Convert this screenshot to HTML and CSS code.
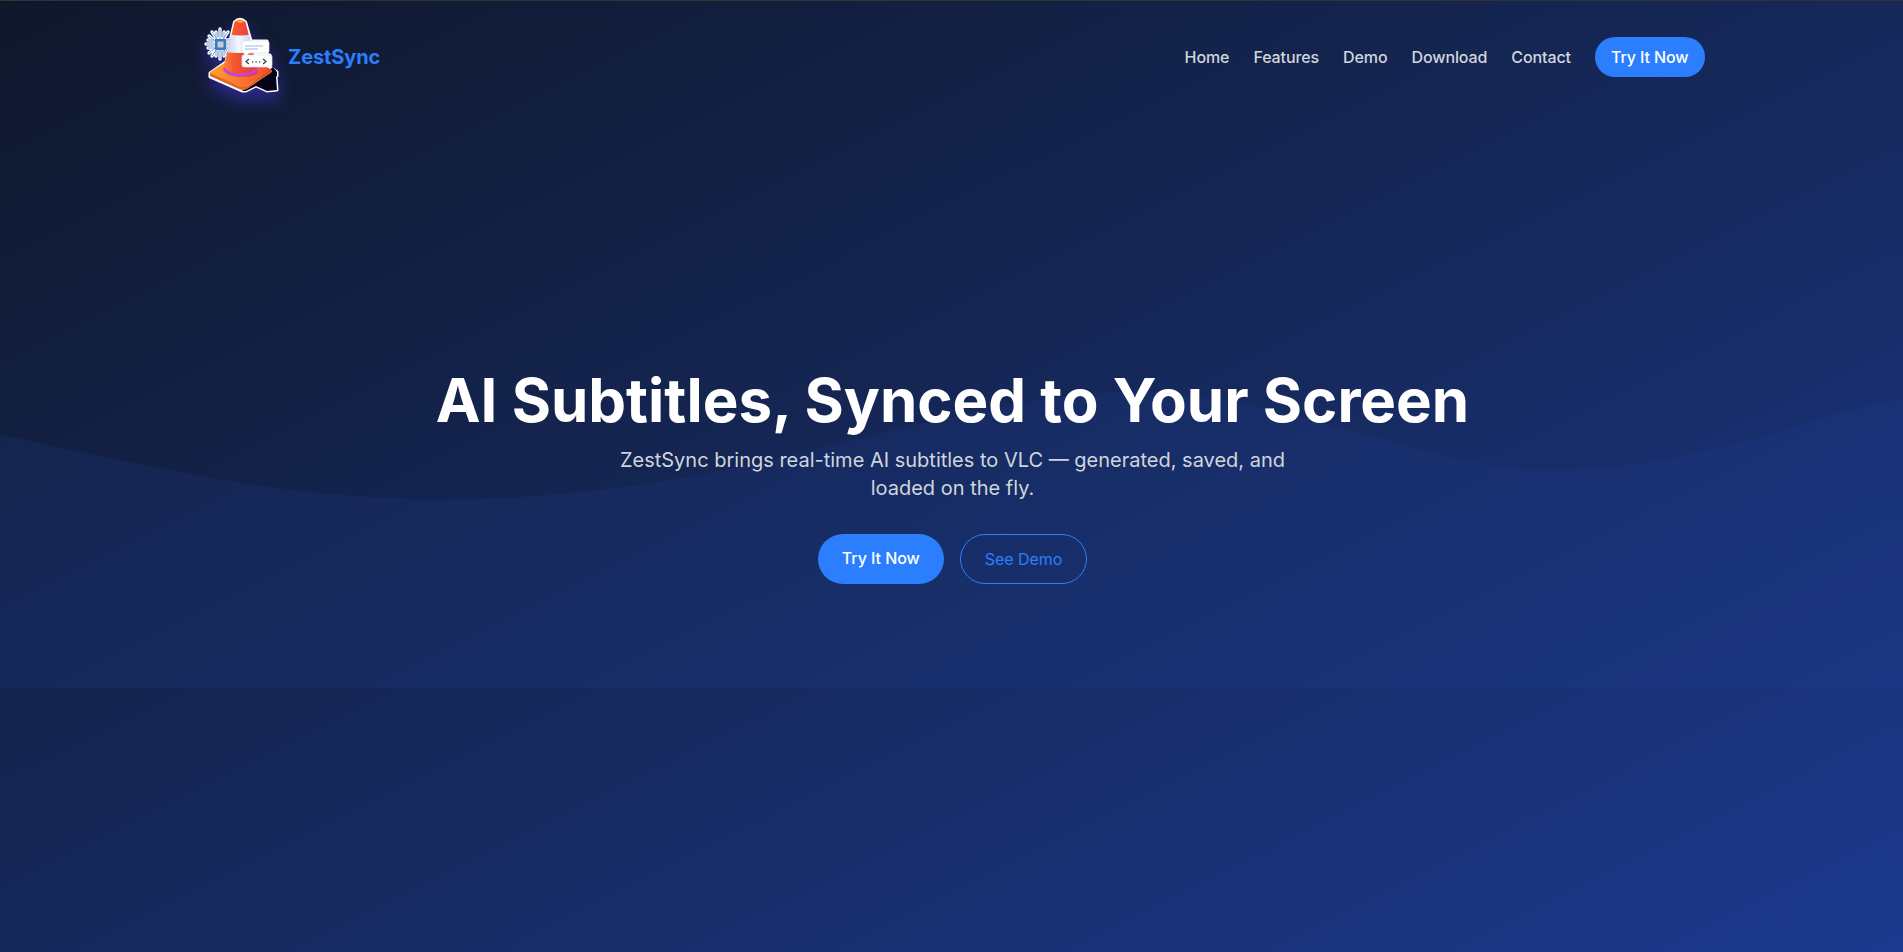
FILE: index.html
```html
<!DOCTYPE html>
<html lang="en">
<head>
<meta charset="utf-8">
<title>ZestSync</title>
<link rel="stylesheet" href="styles.css">
</head>
<body>
<div class="page">
  <svg class="wave" viewBox="0 0 1440 320" aria-hidden="true">
    <path d="M0,128L48,138.7C96,149,192,171,288,176C384,181,480,171,576,149.3C672,128,768,96,864,96C960,96,1056,144,1152,154.7C1248,160,1344,128,1392,112L1440,101L1440,320L0,320Z"/>
  </svg>
  <header class="header">
    <a class="brand" href="#">
      <svg class="logo" viewBox="0 0 90 100" aria-hidden="true">
        <defs>
          <linearGradient id="cone" x1="0" x2="1"><stop offset="0" stop-color="#ff8a3c"/><stop offset=".35" stop-color="#f4572f"/><stop offset="1" stop-color="#e92c55"/></linearGradient>
          <linearGradient id="base" x1="0" x2="1"><stop offset="0" stop-color="#ffa32c"/><stop offset="1" stop-color="#f4482f"/></linearGradient>
          <linearGradient id="band" x1="0" x2="1"><stop offset="0" stop-color="#b9c9f4"/><stop offset=".45" stop-color="#f5f8ff"/><stop offset="1" stop-color="#b9c6f0"/></linearGradient>
          <clipPath id="coneClip"><path d="M39.500 12Q45 7 50.500 12L63 61Q62 67 45 67Q29 66 28 60Z"/></clipPath>
          <path id="rays" d="M25 19V49M21 22V46M29 22V46M11 34H38M13 30H37M13 38H37M14 26L20 31M14 43L20 38M17 22L22 29M17 46L22 39M33 22L28 29M33 46L28 39"/>
        </defs>
        <path class="logo-outline" d="M15 63L31 52L35 31L39.500 12Q45 6.500 50.500 12L56 31H72V45H75V57L82 62V66L81 67L82 80L72 81L61 76L51 81H47L15 67Z"/>
        <path fill="#06031c" d="M47 81L78 57L82 62V66L81 67L82 80L72 81L61 76L51 81Z"/>
        <use class="chip-halo" href="#rays"/>
        <use class="chip-lines" href="#rays"/>
        <rect x="20" y="29" width="11" height="11" rx="1" fill="#347bc5"/>
        <rect x="22.500" y="31.500" width="6" height="6" fill="#c5cbd8"/>
        <path fill="url(#base)" d="M15 62L31 52L65 53L77 60L52 76Q48 79 44 76L16 65Z"/>
        <path fill="#e36423" d="M15 63L44 76Q48 78 52 76L77 60V62L52 79Q48 81 44 79L15 66Z"/>
        <g clip-path="url(#coneClip)">
          <rect x="25" y="7" width="42" height="63" fill="url(#cone)"/>
          <path fill="url(#band)" d="M34 24Q45 27 57 24L61 42Q45 44 29 42Z"/>
          <path fill="#ffa13e" d="M41 11Q45 8 50 11Q45 15 41 11Z"/>
          <path fill="none" stroke="#bd43ed" stroke-width="2.500" d="M28 58Q34 66 46 65Q60 64 64 57"/>
        </g>
        <path class="bubble" d="M49 31H72Q74 31 74 33V41Q74 43 72 43H54L50 47L49 43Q47 43 47 41V33Q47 31 49 31Z"/>
        <path fill="none" stroke="#8fb6f5" stroke-width="1" d="M50 36H68M50 39H63"/>
        <rect class="bubble" x="47" y="45" width="30" height="12" rx="2"/>
        <path fill="none" stroke="#333a44" stroke-width="1.200" d="M54 49L51 51.500L54 54M68 49L71 51.500L68 54"/>
        <path fill="none" stroke="#333a44" stroke-width="1.200" stroke-dasharray="1.300 2.200" d="M57 51.800H66"/>
      </svg>
      <span class="brand-name">ZestSync</span>
    </a>
    <nav class="nav">
      <a href="#">Home</a>
      <a href="#">Features</a>
      <a href="#">Demo</a>
      <a href="#">Download</a>
      <a href="#">Contact</a>
      <a class="nav-cta" href="#">Try It Now</a>
    </nav>
  </header>
  <main class="hero">
    <h1>AI Subtitles, Synced to Your Screen</h1>
    <p>ZestSync brings real-time AI subtitles to VLC — generated, saved, and loaded on the fly.</p>
    <div class="actions">
      <a class="button solid" href="#">Try It Now</a>
      <a class="button outline" href="#">See Demo</a>
    </div>
  </main>
</div>
</body>
</html>
```
FILE: styles.css
```css
* { box-sizing: border-box; }
body { margin: 0; font-family: Inter, sans-serif; font-size: 16px; line-height: 24px; color: #fff; }
a { color: inherit; text-decoration: none; }
.page {
  position: relative;
  height: 952px;
  overflow: hidden;
  border-top: 1px solid #333336;
  background: linear-gradient(to bottom right in oklab, #0f172b, #1c398e);
}
.wave { position: absolute; left: 0; top: 264px; width: 100%; height: 423px; fill: #20439a; opacity: .17; }
.header {
  position: relative;
  display: flex;
  align-items: center;
  justify-content: space-between;
  width: 1536px;
  height: 112px;
  margin: 0 auto;
  padding: 0 15px 0 11.5px;
}
.brand { display: flex; align-items: center; gap: 3px; }
.logo { width: 90px; height: 100px; margin-top: 6px; overflow: visible; filter: drop-shadow(0 9px 8px rgba(79, 57, 246, .45)); }
.logo-outline { fill: #fff; stroke: #fff; stroke-width: 3; stroke-linejoin: round; }
.chip-halo { fill: none; stroke: #fff; stroke-width: 3.4; stroke-linecap: round; }
.chip-lines { fill: none; stroke: #609bdc; stroke-width: .9; }
.bubble { fill: #fff; stroke: #dfe2ed; stroke-width: .7; }
.brand-name { font-size: 20px; line-height: 28px; font-weight: 700; letter-spacing: -.1px; color: #2b7fff; }
.nav { display: flex; align-items: center; gap: 24px; font-weight: 500; letter-spacing: -.1px; color: #d1d5dc; }
.nav-cta { padding: 8px 16px; border-radius: 999px; background: #2b7fff; color: #fff; }
.hero { position: relative; display: flex; flex-direction: column; align-items: center; padding: 257px 0 0 2px; text-align: center; }
h1 { margin: 0; font-size: 60px; line-height: 60px; font-weight: 700; }
p { width: 672px; margin: 16px 0 0; font-size: 20px; line-height: 28px; color: #d1d5dc; }
.actions { display: flex; gap: 16px; margin-top: 32px; }
.button { padding: 12px 24px; border-radius: 999px; letter-spacing: -.06px; }
.solid { background: #2b7fff; font-weight: 500; }
.outline { border: 1px solid #2b7fff; color: #2b7fff; }
```
